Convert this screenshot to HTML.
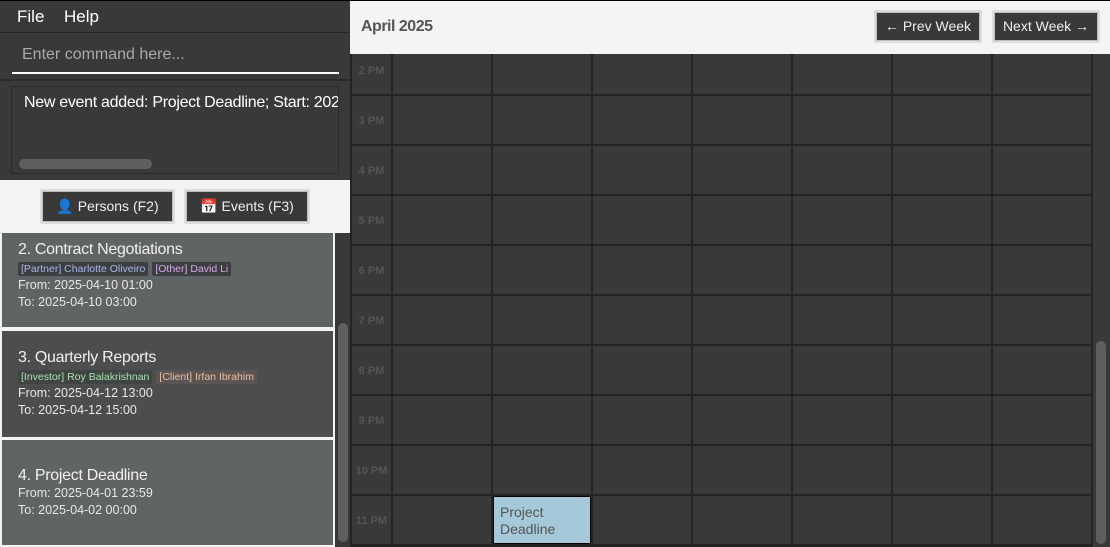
<!DOCTYPE html>
<html><head><style>
*{margin:0;padding:0;box-sizing:border-box}
body{width:1110px;height:547px;overflow:hidden;background:#f3f3f3;font-family:"Liberation Sans",sans-serif;position:relative}
.a{position:absolute}
.t{color:#fff}
.card{position:absolute;left:2px;width:331px;color:#eee;padding-left:16px}
.card .h{font-size:16px;color:#f0f0f0;letter-spacing:-0.3px}
.card .l{font-size:12.5px;line-height:17px;color:#e8e8e8}
.tag{display:inline-block;background:#3c3e40;font-size:10.5px;padding:1px 3px;border-radius:2px;margin-right:4px}
.btn{position:absolute;background:#393939;color:#eee;font-size:14px;border:1px solid #bbb;box-shadow:0 0 0 2px #ddd;text-align:center;line-height:29px}
.tl{position:absolute;left:352px;width:39px;font-size:11px;color:#555;text-align:center;font-weight:bold}
</style></head><body>
<div class="a" style="left:0;top:0;width:1110px;height:1px;background:#000"></div>
<div class="a" style="left:0;top:1px;width:350px;height:179px;background:#393939"></div>
<div class="a" style="left:0;top:32px;width:350px;height:1px;background:#262626"></div>
<div class="a t" style="left:17px;top:7px;font-size:17px">File</div>
<div class="a t" style="left:64px;top:7px;font-size:17px">Help</div>
<div class="a" style="left:22px;top:46px;font-size:16px;color:#aaa">Enter command here...</div>
<div class="a" style="left:12px;top:72px;width:327px;height:2px;background:#fff"></div>
<div class="a" style="left:0;top:79px;width:350px;height:2px;background:#2c2c2c"></div>
<div class="a" style="left:11px;top:86px;width:328px;height:88px;border:1px solid #2a2a2a;overflow:hidden">
<div class="a t" style="left:12px;top:7px;font-size:16px;white-space:nowrap;letter-spacing:-0.3px">New event added: Project Deadline; Start: 2025</div>
<div class="a" style="left:7px;top:72px;width:133px;height:10px;border-radius:5px;background:#5f5f5f"></div>
</div>
<div class="btn" style="left:42px;top:191px;width:131px;height:31px"><span style="color:#4a8fd0">&#128100;</span> Persons (F2)</div>
<div class="btn" style="left:186px;top:191px;width:122px;height:31px"><span style="color:#c33">&#128197;</span> Events (F3)</div>
<div class="card" style="top:233px;height:94px;background:#5f6464">
<div class="h" style="margin-top:8px">2. Contract Negotiations</div>
<div style="margin:0"><span class="tag" style="color:#a9b8e8">[Partner] Charlotte Oliveiro</span><span class="tag" style="color:#d4a9e8">[Other] David Li</span></div>
<div class="l">From: 2025-04-10 01:00</div><div class="l">To: 2025-04-10 03:00</div></div>
<div class="card" style="top:331px;height:106px;background:#4c4d4f">
<div class="h" style="margin-top:18px">3. Quarterly Reports</div>
<div style="margin:0"><span class="tag" style="color:#a8e0b0;background:#404443">[Investor] Roy Balakrishnan</span><span class="tag" style="color:#e8c0a0;background:#5a5553">[Client] Irfan Ibrahim</span></div>
<div class="l">From: 2025-04-12 13:00</div><div class="l">To: 2025-04-12 15:00</div></div>
<div class="card" style="top:440px;height:105px;background:#5f6464">
<div class="h" style="margin-top:27px">4. Project Deadline</div>
<div class="l">From: 2025-04-01 23:59</div><div class="l">To: 2025-04-02 00:00</div></div>
<div class="a" style="left:335px;top:233px;width:15px;height:314px;background:#393939"></div>
<div class="a" style="left:338px;top:323px;width:10px;height:219px;border-radius:5px;background:#5e5e5e"></div>
<div class="a" style="left:350px;top:1px;width:760px;height:53px;background:#f4f4f4"></div>
<div class="a" style="left:361px;top:18px;font-size:16px;font-weight:bold;color:#555;letter-spacing:-0.5px">April 2025</div>
<div class="btn" style="left:876px;top:12px;width:104px;height:29px;line-height:27px">&#8592; Prev Week</div>
<div class="btn" style="left:994px;top:12px;width:104px;height:29px;line-height:27px">Next Week &#8594;</div>
<div class="a" style="left:350px;top:54px;width:760px;height:493px;background:#232323"></div>
<div id="g"></div>
<div class="a" style="left:1093px;top:54px;width:17px;height:493px;background:#393939"></div>
<div class="a" style="left:1096px;top:341px;width:10px;height:203px;border-radius:5px;background:#5e5e5e"></div>
<script>
var rows=[[54,94]];for(var i=0;i<9;i++){rows.push([96+i*50,144+i*50]);}
var cols=[[352,391]];for(var j=0;j<7;j++)cols.push([393+j*100,491+j*100]);
var h='';rows.forEach(function(r){cols.forEach(function(c){h+='<div class="a" style="left:'+c[0]+'px;top:'+r[0]+'px;width:'+(c[1]-c[0])+'px;height:'+(r[1]-r[0])+'px;background:#393939"></div>';});});
var labels=['2 PM','3 PM','4 PM','5 PM','6 PM','7 PM','8 PM','9 PM','10 PM','11 PM'];
labels.forEach(function(l,i){var y=i==0?65:115+(i-1)*50;h+='<div class="tl" style="top:'+y+'px">'+l+'</div>';});
h+='<div class="a" style="left:493px;top:496px;width:98px;height:48px;background:#a5c9d8;border:1px solid #000;color:#555;font-size:14px;line-height:17px;padding:7px 0 0 6px">Project<br>Deadline</div>';
document.getElementById('g').innerHTML=h;
</script>
</body></html>
